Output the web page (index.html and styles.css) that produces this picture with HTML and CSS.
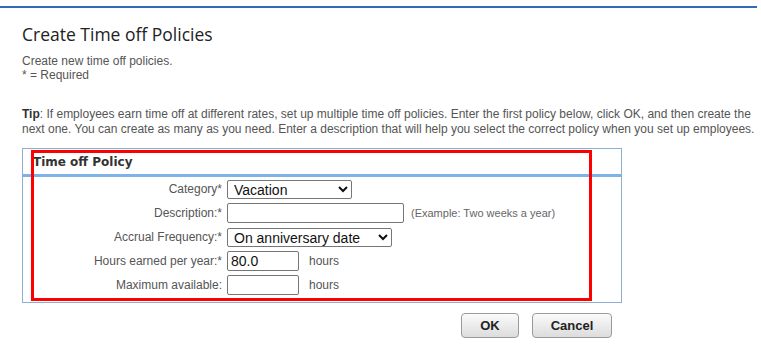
FILE: index.html
```html
<!DOCTYPE html>
<html>
<head>
    <meta name="viewport" content="width=device-width, initial-scale=1.0">
    <link rel="stylesheet" href="styles.css">
</head>
<body>

<div class="topline"></div>

<div class="page">
    <h1>Create Time off Policies</h1>
    <p class="intro">Create new time off policies.<br>* = Required</p>

    <p class="tip"><b>Tip</b>: If employees earn time off at different rates, set up multiple time off policies. Enter the first policy below, click OK, and then create the<br>next one. You can create as many as you need. Enter a description that will help you select the correct policy when you set up employees.</p>

    <div class="panel">
        <div class="panel-head">Time off Policy</div>
        <div class="fields">
            <label for="category">Category*</label>
            <div class="field">
                <select id="category" class="sel-cat">
                    <option>Vacation</option>
                    <option>Sick</option>
                </select>
            </div>

            <label for="desc">Description:*</label>
            <div class="field">
                <input type="text" id="desc" class="txt-desc">
                <span class="hint">(Example: Two weeks a year)</span>
            </div>

            <label for="freq">Accrual Frequency:*</label>
            <div class="field">
                <select id="freq" class="sel-freq">
                    <option>On anniversary date</option>
                    <option>Every pay period</option>
                </select>
            </div>

            <label for="hours">Hours earned per year:*</label>
            <div class="field">
                <input type="text" id="hours" class="txt-num" value="80.0">
                <span class="unit">hours</span>
            </div>

            <label for="max">Maximum available:</label>
            <div class="field">
                <input type="text" id="max" class="txt-num">
                <span class="unit">hours</span>
            </div>
        </div>
        <div class="highlight"></div>
    </div>

    <div class="actions">
        <button type="button" class="btn btn-ok">OK</button>
        <button type="button" class="btn btn-cancel">Cancel</button>
    </div>
</div>

</body>
</html>
```

FILE: styles.css
```css
* {
    box-sizing: border-box;
}

body {
    margin: 0;
    font-family: "Liberation Sans", Arial, sans-serif;
    font-size: 12px;
    color: #555;
    background-color: #ffffff;
}

.topline {
    margin: 6px 4px 0 0;
    border-top: 2px solid #2f6db3;
}

.page {
    padding-left: 22px;
}

h1 {
    margin: 15px 0 0 0;
    font-family: "Open Sans", sans-serif;
    font-size: 17.5px;
    font-weight: normal;
    color: #222;
    line-height: 22px;
}

.intro {
    margin: 9px 0 0 0;
    line-height: 14px;
}

.tip {
    margin: 25px 0 0 0;
    line-height: 15px;
    white-space: nowrap;
}

.tip b {
    color: #333;
}

.panel {
    position: relative;
    margin-top: 11px;
    width: 600px;
    height: 155px;
    border: 1px solid #8eaed3;
}

.panel-head {
    height: 28px;
    padding: 6px 0 0 10px;
    border-bottom: 3px solid #7db3e8;
    font-family: "DejaVu Sans", sans-serif;
    font-size: 12px;
    font-weight: bold;
    color: #333;
}

.fields {
    display: grid;
    grid-template-columns: 199px 1fr;
    grid-auto-rows: 24px;
    column-gap: 5px;
}

.fields label {
    align-self: center;
    text-align: right;
    color: #555;
}

.field {
    display: flex;
    align-items: center;
}

select,
input {
    font-family: "Liberation Sans", Arial, sans-serif;
    font-size: 14px;
    color: #111;
    border: 1px solid #767676;
    border-radius: 2px;
    background-color: #fff;
    margin: 0;
}

select {
    height: 19px;
    padding: 0 2px;
}

input {
    height: 20px;
    padding: 0 3px;
}

.sel-cat {
    width: 125px;
}

.sel-freq {
    width: 165px;
}

.txt-desc {
    width: 177px;
}

.txt-num {
    width: 72px;
}

.hint {
    margin-left: 7px;
    font-size: 11px;
    color: #666;
}

.unit {
    margin-left: 10px;
    color: #555;
}

.highlight {
    position: absolute;
    left: 8px;
    top: 1px;
    width: 561px;
    height: 151px;
    border: 3px solid #ff0000;
}

.actions {
    display: flex;
    gap: 13px;
    margin: 10px 0 0 439px;
}

.btn {
    height: 25px;
    border: 1px solid #9a9a9a;
    border-radius: 4px;
    background: linear-gradient(#fbfbfb, #dcdcdc);
    font-family: "Liberation Sans", Arial, sans-serif;
    font-size: 13px;
    font-weight: bold;
    color: #222;
    cursor: pointer;
}

.btn-ok {
    width: 58px;
}

.btn-cancel {
    width: 80px;
}
```
